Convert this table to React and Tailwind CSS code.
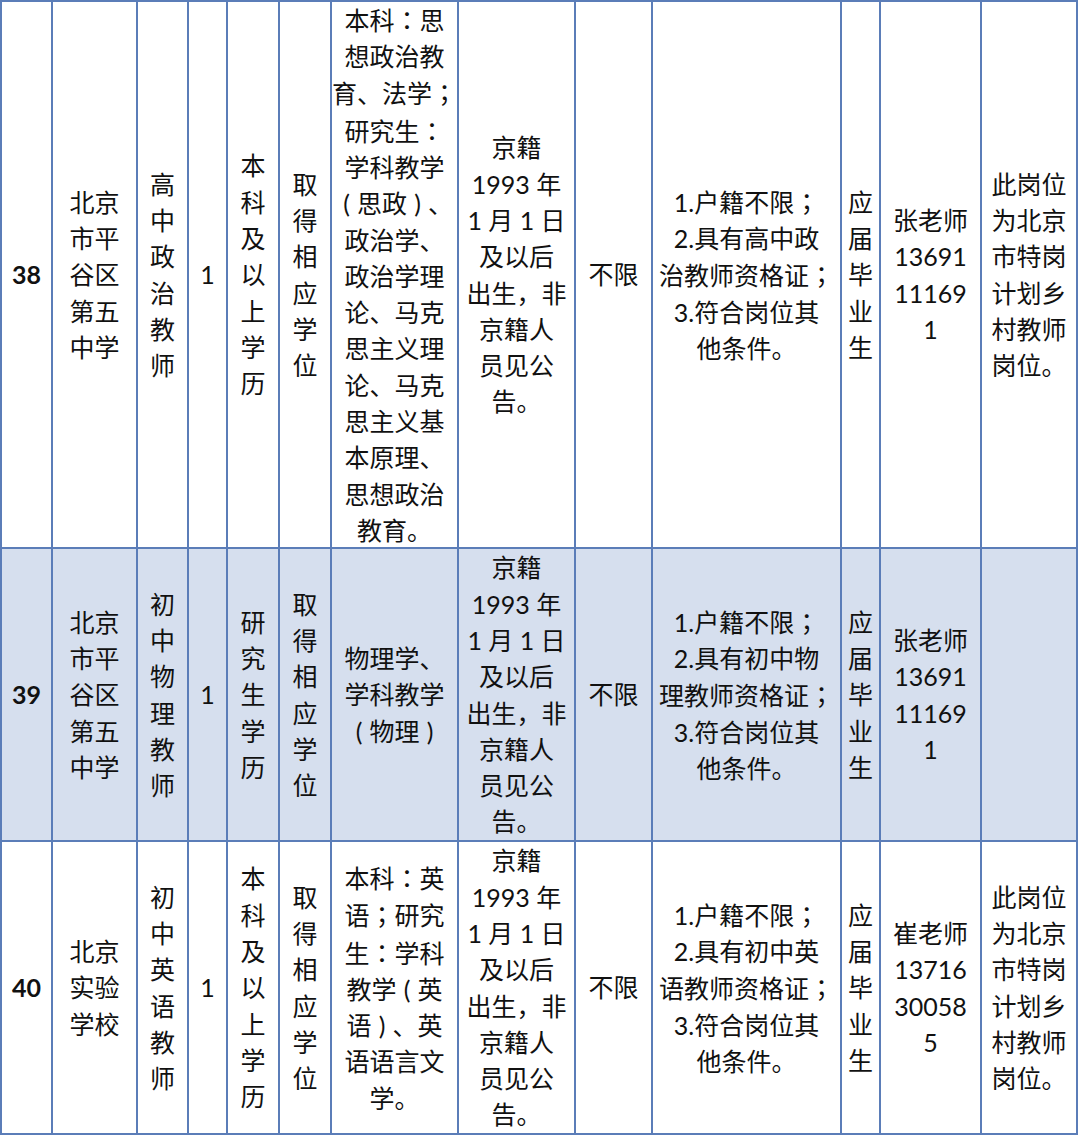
import React from "react";

const rows = [
  {
    shaded: false,
    cells: [
      ["38"],
      ["北京", "市平", "谷区", "第五", "中学"],
      ["高", "中", "政", "治", "教", "师"],
      ["1"],
      ["本", "科", "及", "以", "上", "学", "历"],
      ["取", "得", "相", "应", "学", "位"],
      [
        "本科：思",
        "想政治教",
        "育、法学；",
        "研究生：",
        "学科教学",
        "（思政）、",
        "政治学、",
        "政治学理",
        "论、马克",
        "思主义理",
        "论、马克",
        "思主义基",
        "本原理、",
        "思想政治",
        "教育。",
      ],
      ["京籍", "1993 年", "1 月 1 日", "及以后", "出生，非", "京籍人", "员见公", "告。"],
      ["不限"],
      ["1.户籍不限；", "2.具有高中政", "治教师资格证；", "3.符合岗位其", "他条件。"],
      ["应", "届", "毕", "业", "生"],
      ["张老师", "13691", "11169", "1"],
      ["此岗位", "为北京", "市特岗", "计划乡", "村教师", "岗位。"],
    ],
  },
  {
    shaded: true,
    cells: [
      ["39"],
      ["北京", "市平", "谷区", "第五", "中学"],
      ["初", "中", "物", "理", "教", "师"],
      ["1"],
      ["研", "究", "生", "学", "历"],
      ["取", "得", "相", "应", "学", "位"],
      ["物理学、", "学科教学", "（物理）"],
      ["京籍", "1993 年", "1 月 1 日", "及以后", "出生，非", "京籍人", "员见公", "告。"],
      ["不限"],
      ["1.户籍不限；", "2.具有初中物", "理教师资格证；", "3.符合岗位其", "他条件。"],
      ["应", "届", "毕", "业", "生"],
      ["张老师", "13691", "11169", "1"],
      [],
    ],
  },
  {
    shaded: false,
    cells: [
      ["40"],
      ["北京", "实验", "学校"],
      ["初", "中", "英", "语", "教", "师"],
      ["1"],
      ["本", "科", "及", "以", "上", "学", "历"],
      ["取", "得", "相", "应", "学", "位"],
      ["本科：英", "语；研究", "生：学科", "教学（英", "语）、英", "语语言文", "学。"],
      ["京籍", "1993 年", "1 月 1 日", "及以后", "出生，非", "京籍人", "员见公", "告。"],
      ["不限"],
      ["1.户籍不限；", "2.具有初中英", "语教师资格证；", "3.符合岗位其", "他条件。"],
      ["应", "届", "毕", "业", "生"],
      ["崔老师", "13716", "30058", "5"],
      ["此岗位", "为北京", "市特岗", "计划乡", "村教师", "岗位。"],
    ],
  },
];

function Line({ text }) {
  const parts = [];
  let buf = "";
  const flush = (k) => {
    if (buf) {
      parts.push(<span key={"t" + k}>{buf}</span>);
      buf = "";
    }
  };
  Array.from(text).forEach((ch, i) => {
    if (ch === "（" || ch === "）") {
      flush(i);
      parts.push(
        <span key={"p" + i} className="inline-block w-[21px] text-center">
          {ch === "（" ? "(" : ")"}
        </span>
      );
    } else if (ch === "：" || ch === "；") {
      flush(i);
      parts.push(
        <span key={"c" + i} className="font-['Noto_Sans_CJK_TC',sans-serif]">
          {ch}
        </span>
      );
    } else {
      buf += ch;
    }
  });
  flush("end");
  return <div className="whitespace-nowrap">{parts}</div>;
}

function Cell({ lines, shaded, bold }) {
  return (
    <div
      className={
        shaded
          ? "flex items-center justify-center bg-[#d6dfee]"
          : "flex items-center justify-center bg-white"
      }
    >
      <div className={bold ? "text-center font-bold" : "text-center"}>
        {lines.map((l, i) => (
          <Line key={i} text={l} />
        ))}
      </div>
    </div>
  );
}

export default function App() {
  return (
    <div className="min-h-[1137px] w-[1080px] bg-white font-['Lato','Noto_Sans_CJK_SC',sans-serif] text-[25px] leading-[36.3px] text-[#111]">
      <div className="grid w-fit grid-cols-[49px_83px_49px_37px_50px_50px_125px_115px_75px_187px_37px_99px_94px] grid-rows-[545px_291px_291px] gap-[2px] bg-[#5b7db8] p-[2px]">
        {rows.map((row, ri) =>
          row.cells.map((lines, ci) => (
            <Cell
              key={ri + "-" + ci}
              lines={lines}
              shaded={row.shaded}
              bold={ci === 0}
            />
          ))
        )}
      </div>
    </div>
  );
}
